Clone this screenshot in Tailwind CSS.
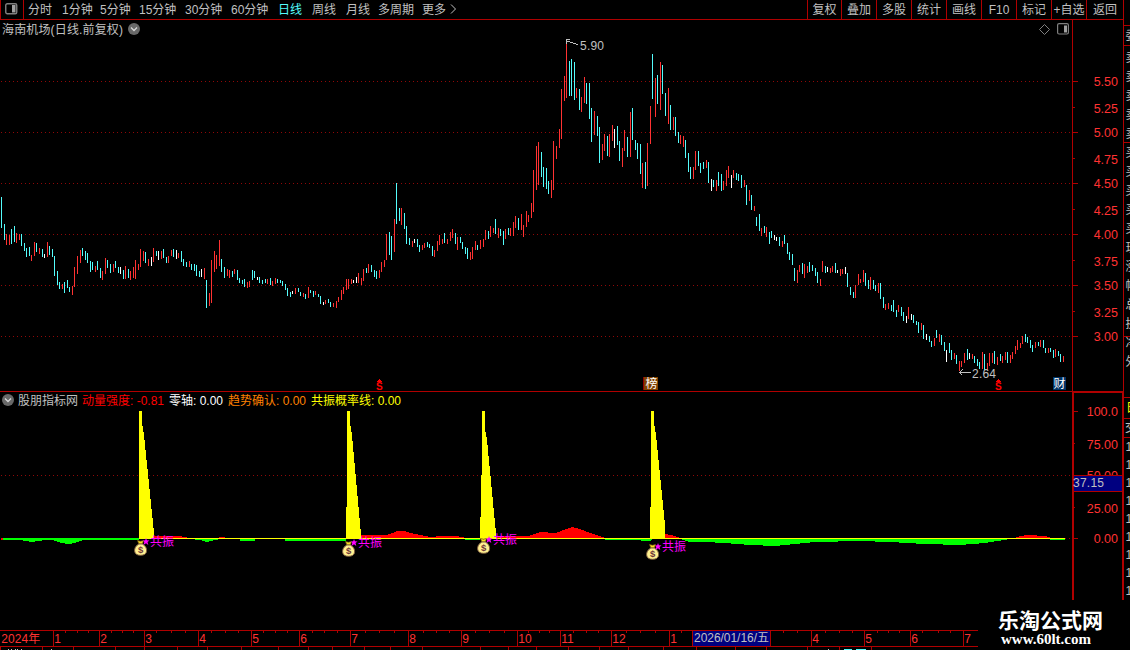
<!DOCTYPE html>
<html lang="zh-CN">
<head>
<meta charset="utf-8">
<title>海南机场 日线</title>
<script src="https://cdn.jsdelivr.net/npm/@tailwindcss/browser@4"></script>
</head>
<body class="w-[1130px] h-[650px] overflow-hidden bg-black text-[#c0c0c0] text-[12px] leading-none font-['Liberation_Sans','Noto_Sans_CJK_SC',sans-serif] flex flex-col">

<header class="flex h-5 shrink-0 whitespace-nowrap">
  <div class="flex w-[1123px] border-b border-[#b00000]">
    <div class="w-6 border-x border-[#b00000] flex items-center pl-1 pb-[2px]">
      <svg width="13" height="12" viewBox="0 0 13 12"><rect x=".75" y=".75" width="11" height="10" rx="1.5" fill="none" stroke="#808080" stroke-width="1.4"/><rect x="7" y="2" width="3.5" height="7.5" fill="#a0a0a0"/></svg>
    </div>
    <nav class="flex grow items-center pl-1 pt-px">
      <span class="w-[34px]">分时</span><span class="w-[38px]">1分钟</span><span class="w-[39px]">5分钟</span><span class="w-[46px]">15分钟</span><span class="w-[46px]">30分钟</span><span class="w-[47px]">60分钟</span><span class="w-[34px] text-[#54fcfc]">日线</span><span class="w-[34px]">周线</span><span class="w-[32px]">月线</span><span class="w-[44px]">多周期</span><span class="w-[28px]">更多</span>
      <svg class="mb-[3px]" width="7" height="10" viewBox="0 0 7 10"><path d="M1 .5L5.5 5L1 9.5" fill="none" stroke="#c0c0c0"/></svg>
    </nav>
    <div class="flex text-center leading-5">
      <span class="w-[34px] border-l border-[#b00000]">复权</span><span class="w-[35px] border-l border-[#b00000]">叠加</span><span class="w-[35px] border-l border-[#b00000]">多股</span><span class="w-[35px] border-l border-[#b00000]">统计</span><span class="w-[35px] border-l border-[#b00000]">画线</span><span class="w-[35px] border-l border-[#b00000]">F10</span><span class="w-[35px] border-l border-[#b00000]">标记</span><span class="w-[35px] border-l border-[#b00000]">+自选</span><span class="w-[37px] border-l border-[#b00000]">返回</span>
    </div>
  </div>
  <div class="w-[7px] border-l border-[#b00000]"></div>
</header>

<main class="flex h-[580px] shrink-0">
  <div class="w-[1072px] flex flex-col">
    <section class="relative h-[372px] border-b border-[#b00000]">
      <div class="absolute inset-x-0 top-0 flex items-center h-[18px] pl-[2px] pr-[3px]">
        <span class="w-[126px] whitespace-nowrap tracking-[0.15px] pt-px">海南机场(日线.前复权)</span>
        <svg width="12" height="12" viewBox="0 0 12 12"><circle cx="6" cy="6" r="6" fill="#686868"/><path d="M3 4.5L6 7.5L9 4.5" fill="none" stroke="#d8d8d8" stroke-width="1.3"/></svg>
        <svg class="ml-auto mr-[7px]" width="11" height="11" viewBox="0 0 11 11"><path d="M5.5 .5L10.5 5.5L5.5 10.5L.5 5.5Z" fill="none" stroke="#808080"/></svg>
        <svg width="12" height="12" viewBox="0 0 12 12"><rect x=".6" y=".6" width="10.8" height="10.4" rx="1.5" fill="none" stroke="#808080" stroke-width="1.2"/><rect x="7" y="2.5" width="3" height="7" fill="#a0a0a0"/></svg>
      </div>
      <svg id="price" class="block" width="1072" height="371" viewBox="0 20 1072 371" shape-rendering="crispEdges"></svg>
    </section>
    <section class="relative h-[208px]">
      <div class="absolute inset-x-0 top-0 flex items-center h-4 pl-[2px] whitespace-nowrap">
        <svg width="12" height="12" viewBox="0 0 12 12"><circle cx="6" cy="6" r="6" fill="#686868"/><path d="M3 4.5L6 7.5L9 4.5" fill="none" stroke="#d8d8d8" stroke-width="1.3"/></svg>
        <span class="ml-[4px] w-[64px] pt-px">股朋指标网</span><span class="w-[87px] pt-px text-[#ff0000]">动量强度: -0.81</span><span class="w-[59px] pt-px text-white">零轴: 0.00</span><span class="w-[83px] pt-px text-[#ff8000]">趋势确认: 0.00</span><span class="pt-px text-[#ffff00]">共振概率线: 0.00</span>
      </div>
      <svg id="osc" class="block" width="1072" height="208" viewBox="0 392 1072 208" shape-rendering="crispEdges"></svg>
    </section>
  </div>
  <svg id="axis" class="block" width="52" height="580" viewBox="1072 20 52 580" shape-rendering="crispEdges"></svg>
  <svg id="strip" class="block" width="6" height="580" viewBox="1124 20 6 580" shape-rendering="crispEdges"></svg>
</main>

<footer class="flex h-[50px] shrink-0">
  <svg id="dates" class="block" width="978" height="50" viewBox="0 600 978 50" shape-rendering="crispEdges"></svg>
  <div class="w-[152px] flex flex-col pl-5 pt-2 text-white whitespace-nowrap">
    <span class="text-[21px] leading-[22px] font-bold font-['Noto_Sans_CJK_SC',sans-serif]">乐淘公式网</span>
    <span class="pl-[3px] text-[15px] leading-[18px] font-bold font-['Liberation_Serif',serif]">www.60lt.com</span>
  </div>
</footer>

<script>
const RED = '#b00000', UP = '#ff3232', COL = { c: '#54fcfc', r: UP, w: '#ffffff' };
const rect = (x, y, w, h, f) => `<rect x="${x}" y="${y}" width="${w}" height="${h}" fill="${f}"/>`;
const text = (x, y, s, f, extra = '') => `<text x="${x}" y="${y}" fill="${f}" font-size="12" ${extra}>${s}</text>`;
const dots = y => `<path d="M1 ${y}.5H1070" stroke="#900808" stroke-dasharray="1 3"/>`;

/* Bars in runs: left, top, then "colour+x high low" in thirds of a pixel. */
const runs = [
[0,180,'c4 51 144;c13 132 180;r19 162 195;r28 165 195;c34 147 192;c43 138 186;r49 159 189;r58 162 180;c64 162 198;c73 189 213;c79 204 231;c88 201 228;r94 225 243;r103 186 228;c109 189 216;r118 204 222;c127 207 231;w133 222 234;r142 186 231;c148 198 225;c157 207 231;c163 228 288;c172 273 315;c178 306 327;r187 312 327;c193 306 339;c202 300 324;c208 321 336;r217 318 345;r223 261 321;r232 228 282;r241 210 249;c247 204 228;c256 213 240;c262 219 249;c271 243 276;c277 246 270;r286 258 276;c292 243 270;c301 264 294;r307 273 300;r316 234 282;c322 240 264;c331 252 279;r340 252 276;c346 243 264;c355 261 279;w361 261 282;c370 270 297;r376 258 297;c385 267 294;r391 273 300;r400 261 294;r406 240 297;r415 252 270;r421 207 261;r430 213 243;c436 216 249;r445 237 258;w454 231 258;r460 204 246;c469 213 228;w475 213 240;r484 213 237;c490 207 234;c499 231 249;r505 228 249;r514 210 228;c520 207 231;w529 210 237;r535 219 234;c544 213 246;c550 237 258;c559 246 261;r568 243 261;c574 252 270;c583 252 273;c589 255 288;c598 273 291;w604 267 291;r613 264 297;c619 300 384;r628 339 378;r634 240 369;r643 213 276;r649 225 267;r658 180 258;c664 237 276;c673 261 294;r682 267 288;r688 270 294;c697 273 291;r703 267 282;c712 270 300;c718 294 309;c727 300 312;c733 297 321;r742 306 324;r748 303 321;c757 270 300;c763 273 294;w772 291 300;c778 291 309;c787 300 312;c796 297 309;r802 297 312'],
[270,170,'c1 324 345;r7 333 348;r16 324 342;c22 327 339;c31 330 339;c37 333 348;c46 342 360;c52 354 378;c61 366 381;w67 363 372;r76 354 372;c85 354 366;c91 366 378;r100 369 381;c106 372 387;r115 351 384;c121 360 369;c130 363 381;r136 363 375;c145 372 381;c151 378 402;w160 396 405;r166 390 402;c175 387 399;c181 396 411;r190 399 411;r199 393 414;r205 381 396;r214 360 390;r220 351 372;r229 327 360;r235 327 357;r244 327 342;w250 330 339;w259 321 339;r265 309 339;r274 324 345;r280 297 333;c289 294 309;r295 282 309;c304 285 306;c313 300 321;c319 303 327;r328 300 324;r334 276 306;r343 270 291;r349 192 270;c358 186 255;c364 198 270;r373 147 246;c379 39 162;c388 114 153;r394 114 165;c403 129 177;c409 168 222;c418 204 225;r427 213 231;w433 207 219;c442 207 231;c448 225 246;r457 225 240;r463 219 234;c472 216 231;c478 222 234;c487 228 258;r493 240 261;r502 213 243;r508 195 225;r517 207 222;c523 189 219;r532 207 222;r541 186 213;r547 177 204;c556 189 222;r562 201 240;c571 201 219;c577 216 237;c586 231 252;c592 234 267;r601 246 270;r607 231 267;r616 213 240;c622 225 240;r631 210 237;r640 207 231;r646 180 210;c655 183 207;r661 168 201;r670 174 189;c676 147 192;r685 174 204'],
[500,30,'c1 597 618;c10 603 645;r16 597 627;c25 594 615;r31 594 618;r40 576 618;r46 558 594;c55 564 600;r64 552 600;r70 585 621;r79 543 591;r85 555 576;r94 519 564;r100 420 546;r109 348 480;r115 336 465;c124 366 441;c130 411 471;c139 414 477;c145 453 492;r154 450 504;r160 333 480;r169 348 387;r178 297 354;r184 177 327;r193 138 213;r199 39 204;c208 93 198;c214 87 198;c223 96 210;r229 174 204;c238 177 240;r244 201 246;r253 141 219;c259 159 222;c268 159 267;c274 234 336;r283 243 315;c292 258 318;c298 291 399;r307 342 390;r313 312 363;c322 318 378;r328 312 381;r337 285 333;w343 297 354;c352 288 345;c358 333 393;r367 354 411;r373 300 363;c382 321 381;r391 246 381;c397 234 330;c406 330 360;c412 339 387;c421 342 432;r427 399 474;c436 396 477;r442 339 468;r451 228 342;c457 72 207;r466 144 261;c472 135 222;r481 96 240;c487 105 192;c496 189 258;r505 174 282;c511 225 300;r520 261 300;c526 261 318;c535 306 339;r541 315 342;r550 318 351;c556 330 384;c565 369 426;c571 411 447;r580 411 447;r586 363 420;c595 363 408;c601 399 429;c610 396 417;r619 390 414;c625 396 459;w634 447 483;c640 450 471;r649 450 483;c655 426 468;c664 432 483;r670 453 480;r679 420 468;r685 408 444;w694 435 474;r700 420 444;c709 429 450;c715 432 453'],
[740,150,'c4 75 114;r13 90 111;c19 105 165;r28 120 153;c34 135 180;r43 168 183;c49 201 228;c58 192 243;r64 234 258;c73 228 249;r79 231 261;c88 246 282;c94 243 264;w103 255 270;w109 261 273;c118 261 288;r127 273 291;c133 255 282;c142 279 312;c148 306 330;c157 312 345;c163 354 393;r172 360 399;r178 345 366;c187 339 372;r193 342 384;r202 348 369;c208 336 366;c217 345 363;c226 354 378;c232 366 399;r241 387 408;r247 333 366;c256 348 369;w262 351 366;r271 354 369;r277 348 366;c286 339 369;w292 360 369;r301 357 378;r307 357 372;w316 351 372;c322 369 411;c331 411 435;c340 426 444;r346 405 444;r355 372 405;r361 387 399;r370 360 396;c376 369 408;c385 390 417;r391 381 420;c400 390 417;c406 405 423;r415 399 429;c421 399 447;c430 441 474;r436 462 480;r445 459 477;c454 465 483;c460 450 486;c469 480 501;r475 465 486'],
[900,290,'c4 51 78;c10 66 93;w19 78 99;r25 51 87;w34 72 90;c40 75 99;c49 93 105;c55 96 129;r64 99 120;c70 105 147;w79 132 150;c88 138 156;c94 153 171;r103 144 168;c109 120 144;r118 132 156;c124 135 165;c133 156 183;w139 180 216;c148 159 189;c154 180 210;r163 189 207;c169 195 222;r178 213 243;r184 213 231;r193 189 219;c202 177 210;w208 189 207;r217 192 207;c223 198 219;c232 207 228;c238 216 237;r247 186 237;c253 192 240;r262 219 240;r268 189 228;r277 189 219;c283 183 222;r292 201 225;c301 192 213;r307 198 219;r316 186 210;c322 186 219;r331 195 219;r337 186 207;r346 168 192;r352 150 180;r361 159 174;r367 138 162;c376 132 156;c382 141 159;c391 150 174;c397 165 186;r406 156 174;c415 156 168;r421 150 171;c430 150 174;c436 174 189;r445 174 189;c451 174 186;c460 180 204;r466 177 201;c475 183 198;c481 192 216;r490 198 216']
];
let p = [81,132,183,234,285,336].map(dots).join('');
for (const [ox, oy, s] of runs) for (const b of s.split(';')) {
  const [x, t, e] = b.slice(1).split(' ').map(Number);
  p += rect(ox + Math.floor(x / 3), oy + t / 3, 1, (e - t) / 3, COL[b[0]]);
}
const dollar = x => `<path d="M${x} 381.5h5M${x+1} 380.5h3M${x+2} 379.5h1" stroke="#f00"/>` + text(x - 1, 390, 'S', '#ff0000', 'font-weight="bold" style="font-size:10px"');
p += '<path d="M569.5 39.5H566.5V44M567 41.5H570M570 42.5H573M573 43.5H576M576 44.5H578" stroke="#c0c0c0" fill="none"/>' + text(580, 50, '5.90', '#c0c0c0', 'textLength="24"');
p += '<path d="M959.5 372.5H971M962.5 369.5L959.5 372.5L962.5 375.5" stroke="#c0c0c0" fill="none"/>' + text(972, 378, '2.64', '#c0c0c0', 'textLength="24"');
p += dollar(377) + dollar(996);
p += rect(643,377,15,13,'#804000') + rect(643,377,1,13,'#900000') + text(645.5,388,'榜','#fff');
p += rect(1053,377,13,13,'#003366') + text(1053.5,388,'财','#fff');
price.innerHTML = p;

const poly = (pts, f) => `<polygon points="${pts}" fill="${f}"/>`;
const bag = (x, y) => `<g shape-rendering="auto" transform="translate(${x} ${y})"><path d="M3.500 .5L6.500 1.200L9.500 .5L8.400 4H4.800Z" fill="#f8e020" stroke="#705010" stroke-width=".7"/><path d="M4.800 4C1.500 6 .4 8.500 .6 11C1 14 3 15.300 6.600 15.300S12.300 14 12.600 11C12.800 8.500 11.700 6 8.400 4Z" fill="#fff090" stroke="#806040" stroke-width="1"/><text x="6.600" y="13.200" text-anchor="middle" font-size="9.500" font-weight="bold" fill="#703838">$</text></g>`;
const star = (x, y) => `<path shape-rendering="auto" transform="translate(${x} ${y})" d="M3 0L3.900 2.300L6.500 2.500L4.500 4L5.300 7L3 5.300L.5 7L1.300 4L0 2.500L2.200 2.300Z" fill="#f0f"/>`;
let o = dots(475) + dots(538);
o += rect(3,538,136,2,'#00ff00') + rect(1,538,2,2,'#ff0000');
o += poly('20,540 32,542 45,540', '#00ff00') + poly('52,540 62,543 68,544 75,543 83,540', '#00ff00');
o += poly('153,538 153,536 179,536 190,538', '#ff0000') + poly('190,539 200,540 207,542 215,540 221,539', '#00ff00') + rect(219,537,6,1,'#ff0000') + rect(240,539,15,2,'#00ff00') + rect(285,539,61,2,'#00ff00');
o += poly('361,539 361,535 386,535 393,533 397,531 404,531 411,533 420,535 430,537 442,536 457,536 466,538', '#ff0000') + rect(465,539,15,1,'#00ff00');
o += poly('496,539 496,536 528,536 540,532 556,533 566,529 572,527 580,529 590,533 605,538', '#ff0000') + rect(605,539,35,1,'#00ff00') + poly('636,539 642,541 650,541 652,539', '#00ff00');
o += poly('665,539 665,534 671,535 681,538', '#ff0000') + poly('680,539 690,542 705,542 725,543 750,545 775,546 795,544 815,542 860,541 890,542 925,544 960,545 985,543 1010,539', '#00ff00');
o += poly('1013,539 1020,536 1028,535 1045,536 1052,538', '#ff0000') + rect(1050,539,15,1,'#00ff00');
o += rect(153,538,912,1,'#ffff00');
o += poly('139,411 142,411 142,423 144,435 153,523 154,532 154,539 139,539', '#ffff00');
o += poly('347,411 350,411 350,423 352,435 360,523 361,535 361,539 346,539 346,507 347,507', '#ffff00');
o += poly('482,411 485,411 485,429 487,440 495,523 496,533 496,539 480,539 480,517 481,517 481,475 482,475', '#ffff00');
o += poly('651,411 654,411 654,423 656,435 664,515 665,525 665,539 650,539 650,507 651,507', '#ffff00');
for (const [x, y] of [[134,540],[342,541],[477,538],[646,544]]) o += bag(x, y);
for (const [x, y] of [[143,546],[351,547],[486,544],[655,551]]) o += star(x, y - 8) + text(x + 7, y, '共振', '#ff00ff');
osc.innerHTML = o;

let a = rect(1072,20,1,371,RED) + rect(1072,391,52,2,RED) + rect(1072,391,2,209,RED) + rect(1122,391,2,209,RED) + rect(1123,20,1,371,RED);
const label = (y, s) => text(1118, y + 4.500, s, UP, 'text-anchor="end" style="font-size:12.500px"');
[['5.50',81],['5.25',108],['5.00',132],['4.75',159],['4.50',183],['4.25',210],['4.00',234],['3.75',261],['3.50',285],['3.25',312],['3.00',336]].forEach(([s, y], i) => { a += label(y + .5, s) + rect(1073, y - (i % 2), i % 2 ? 2 : 5, 1, RED); });
[['100.0',411],['75.00',444],['50.00',475],['25.00',508],['0.00',538]].forEach(([s, y], i) => { a += label(y + .5, s) + rect(1074, i % 2 ? y - 1 : y, i % 2 ? 1 : 4, 1, RED); });
a += rect(1074,475,48,17,RED) + rect(1074,476,48,15,'#000080') + text(1073, 487, '37.15', '#c0c0c0', 'textLength="31"');
axis.innerHTML = a;

let s = '';
for (const y of [25,45,142,336,397,418,437]) s += rect(1124, y, 6, 1, RED);
[...'委卖卖卖卖卖买买买买买现涨幅总换净外'].forEach((ch, i) => { s += text(1125.5, 40 + i * 19 + (i ? 3 : 0), ch, '#c0c0c0'); });
s += text(1126, 412, '日', '#ffff00') + text(1125, 432, '交', '#c0c0c0');
for (let i = 0; i < 9; i++) s += text(1125.5, 451 + i * 18, '14', '#c0c0c0');
strip.innerHTML = s;

let d = rect(0,630,978,1,RED) + rect(0,646,978,1,RED);
[['2024年',0],['1',53],['2',99],['3',144],['4',198],['5',251],['6',299],['7',350],['8',408],['9',461],['10',517],['11',560],['12',611],['1',669],['',692],['',770],['4',811],['5',864],['6',910],['7',963]].forEach(([t, x]) => { if (x) d += rect(x, 630, 1, 17, RED); d += text(x + 1.3, 643, t, UP, t.length > 2 ? 'textLength="39"' : ''); });
for (const x of [65,77,88,111,122,133,156,171,185,211,225,238,263,275,287,312,324,337,365,379,394,423,436,449,475,489,504,528,539,549,573,586,598,626,640,655,681,783,797,825,839,852,877,888,899,922,938,950]) d += rect(x, 631, 1, 2, RED);
for (const x of [0,42,73,115,144,177,207,241,278,308,332,364,390,422,480,508,536,568,599,628,663,696,735,766,807,839,871]) d += rect(x, 647, 1, 3, RED);
for (const x of [8,11,15,17,21,51,828]) d += rect(x, 649, 1, 1, '#c0c0c0');
d += rect(844,649,8,1,'#54fcfc') + rect(856,649,10,1,'#54fcfc');
d += rect(693,631,77,15,'#000080') + text(694, 642, '2026/01/16/五', '#c0c0c0', 'textLength="75"');
dates.innerHTML = d;
</script>
</body>
</html>
